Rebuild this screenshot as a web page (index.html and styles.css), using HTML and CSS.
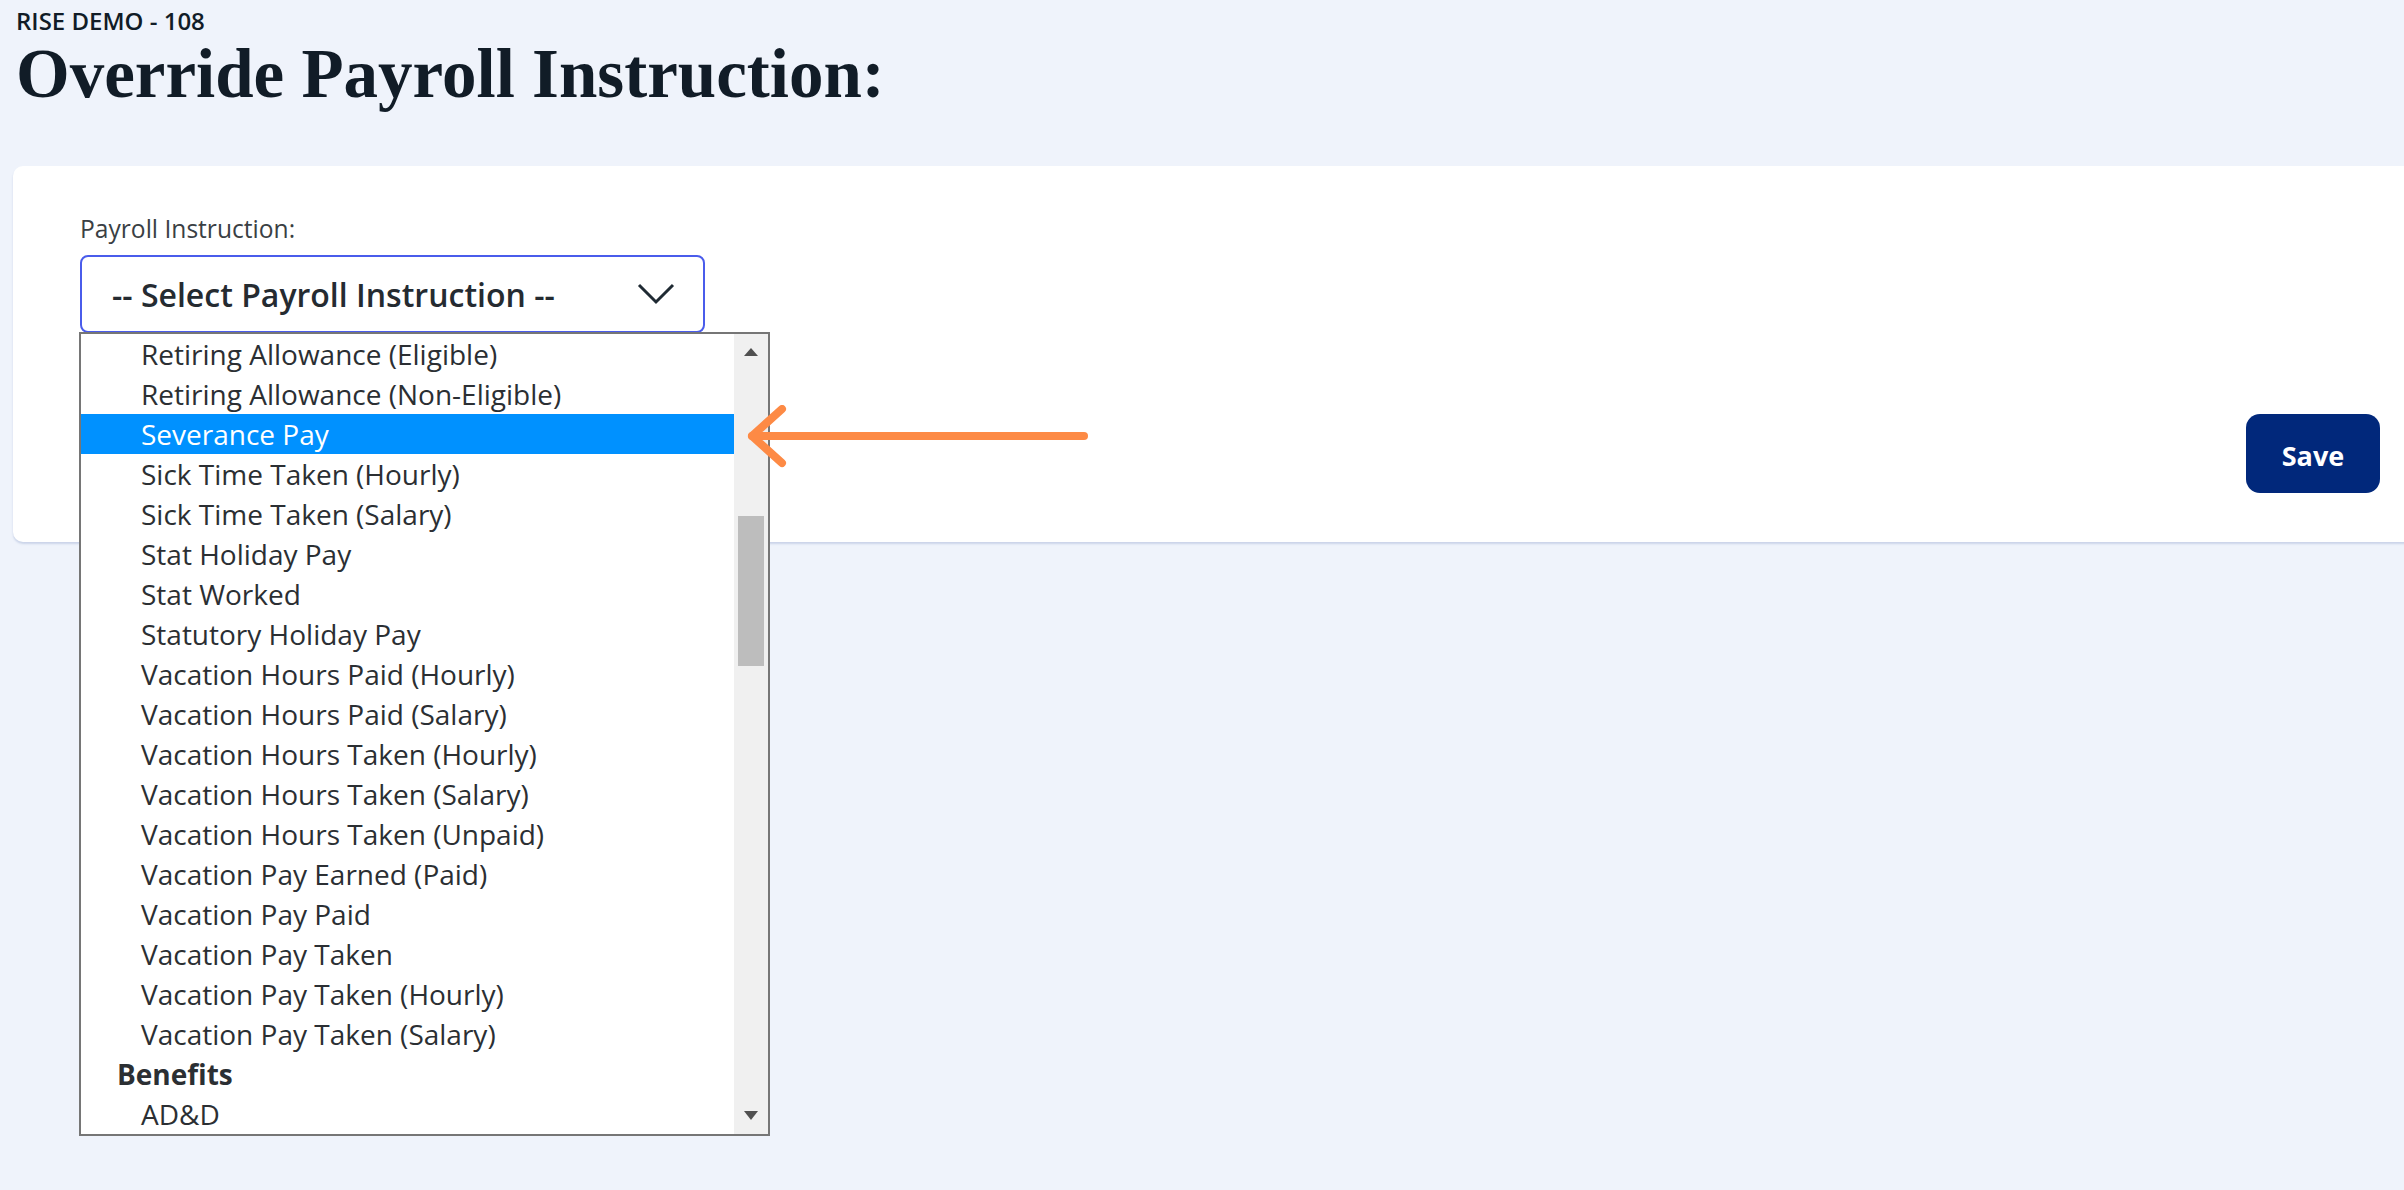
FILE: index.html
```html
<!DOCTYPE html>
<html lang="en">
<head>
    <meta charset="UTF-8">
    <meta name="viewport" content="width=device-width, initial-scale=1.0">
    <title>Override Payroll Instruction</title>
    <link rel="stylesheet" href="styles.css">
</head>
<body>
    <header class="page-header">
        <div class="company">RISE DEMO - 108</div>
        <h1>Override Payroll Instruction:</h1>
    </header>

    <main class="card">
        <div class="field">
            <label class="field-label">Payroll Instruction:</label>
            <div class="select-wrap">
                <div class="select-box">
                    <span>-- Select Payroll Instruction --</span>
                    <svg class="chevron" width="38" height="22" viewBox="0 0 38 22">
                        <polyline points="2,2 19,19 36,2" fill="none" stroke="#1f2a33" stroke-width="3"/>
                    </svg>
                </div>

                <div class="listbox">
                    <ul class="options">
                        <li>Retiring Allowance (Eligible)</li>
                        <li>Retiring Allowance (Non-Eligible)</li>
                        <li class="selected">Severance Pay</li>
                        <li>Sick Time Taken (Hourly)</li>
                        <li>Sick Time Taken (Salary)</li>
                        <li>Stat Holiday Pay</li>
                        <li>Stat Worked</li>
                        <li>Statutory Holiday Pay</li>
                        <li>Vacation Hours Paid (Hourly)</li>
                        <li>Vacation Hours Paid (Salary)</li>
                        <li>Vacation Hours Taken (Hourly)</li>
                        <li>Vacation Hours Taken (Salary)</li>
                        <li>Vacation Hours Taken (Unpaid)</li>
                        <li>Vacation Pay Earned (Paid)</li>
                        <li>Vacation Pay Paid</li>
                        <li>Vacation Pay Taken</li>
                        <li>Vacation Pay Taken (Hourly)</li>
                        <li>Vacation Pay Taken (Salary)</li>
                        <li class="group">Benefits</li>
                        <li>AD&amp;D</li>
                    </ul>
                    <div class="scrollbar">
                        <span class="arrow-up"></span>
                        <span class="thumb"></span>
                        <span class="arrow-down"></span>
                    </div>
                </div>

                <svg class="pointer" width="360" height="66" viewBox="0 0 360 66">
                    <g fill="none" stroke="#fd8a45" stroke-width="8" stroke-linecap="round" stroke-linejoin="round">
                        <line x1="8" y1="31" x2="340" y2="31"/>
                        <polyline points="38,4 8,31 38,58"/>
                    </g>
                </svg>
            </div>
        </div>

        <div class="actions">
            <button class="btn-save">Save</button>
        </div>
    </main>
</body>
</html>
```

FILE: styles.css
```css
* {
    box-sizing: border-box;
    margin: 0;
    padding: 0;
}

body {
    font-family: 'Open Sans', 'Noto Sans', sans-serif;
    background-color: #eff3fb;
    color: #2b2f33;
    overflow: hidden;
    height: 1190px;
}

.page-header {
    padding: 6px 16px 0;
    color: #111c27;
}

.company {
    font-size: 24px;
    font-weight: 600;
    line-height: 30px;
}

h1 {
    font-family: 'Liberation Serif', 'Times New Roman', serif;
    font-size: 69px;
    font-weight: 700;
    line-height: 76px;
}

.card {
    background-color: #ffffff;
    margin: 54px -40px 0 13px;
    padding: 48px 64px 49px 67px;
    border-radius: 10px;
    box-shadow: 0 2px 2px rgba(160, 176, 210, 0.45);
    height: 376px;
}

.field-label {
    display: block;
    font-size: 24.6px;
    line-height: 30px;
    color: #3a3f44;
    margin-bottom: 11px;
}

.select-wrap {
    position: relative;
    width: 625px;
}

.select-box {
    height: 78px;
    border: 2px solid #4a5ceb;
    border-radius: 8px;
    display: flex;
    align-items: center;
    justify-content: space-between;
    padding: 0 28px 0 30px;
    font-size: 32px;
    font-weight: 600;
    color: #252b31;
}

.chevron {
    display: block;
}

.listbox {
    position: absolute;
    top: 77px;
    left: -1px;
    width: 691px;
    height: 804px;
    background-color: #ffffff;
    border: 2px solid #767676;
    display: flex;
    z-index: 2;
}

.options {
    list-style: none;
    flex: 1;
}

.options li {
    height: 40px;
    line-height: 40px;
    padding-left: 60px;
    font-size: 28px;
    color: #2b2f33;
    white-space: nowrap;
}

.options li.selected {
    background-color: #0091ff;
    color: #ffffff;
}

.options li.group {
    padding-left: 36px;
    font-weight: 700;
}

.scrollbar {
    width: 34px;
    background-color: #f0f0f0;
    position: relative;
}

.arrow-up,
.arrow-down {
    position: absolute;
    left: 10px;
    width: 0;
    height: 0;
    border-left: 7px solid transparent;
    border-right: 7px solid transparent;
}

.arrow-up {
    top: 14px;
    border-bottom: 8px solid #505050;
}

.arrow-down {
    bottom: 14px;
    border-top: 9px solid #505050;
}

.thumb {
    position: absolute;
    top: 182px;
    left: 4px;
    width: 26px;
    height: 150px;
    background-color: #bdbdbd;
}

.pointer {
    position: absolute;
    left: 664px;
    top: 150px;
    z-index: 3;
}

.actions {
    display: flex;
    justify-content: flex-end;
    margin-top: 81px;
}

.btn-save {
    font-family: 'Open Sans', 'Noto Sans', sans-serif;
    width: 134px;
    height: 79px;
    padding-top: 4px;
    border: none;
    border-radius: 14px;
    background-color: #01287b;
    color: #ffffff;
    font-size: 27px;
    font-weight: 700;
}
```
